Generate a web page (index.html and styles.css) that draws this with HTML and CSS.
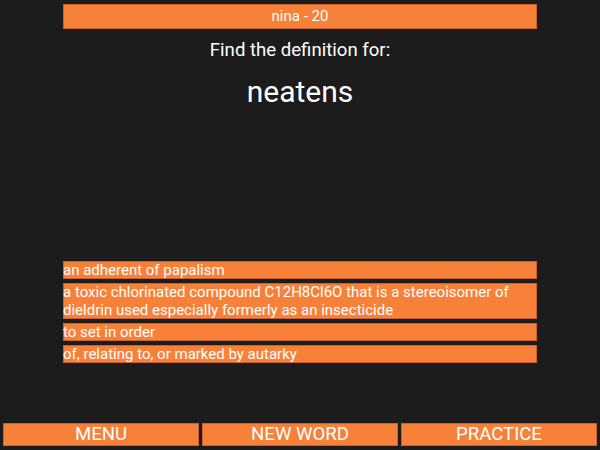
FILE: index.html
```html
<!DOCTYPE html>
<html>
<head>
<meta charset="utf-8">
<link rel="stylesheet" href="styles.css">
</head>
<body>
<div class="page">
  <div class="column">
    <div class="topbar">nina - 20</div>
    <div class="prompt">Find the definition for:</div>
    <div class="word">neatens</div>
  </div>
  <div class="column defs">
    <div class="def">an adherent of papalism</div>
    <div class="def">a toxic chlorinated compound C12H8Cl6O that is a stereoisomer of dieldrin used especially formerly as an insecticide</div>
    <div class="def">to set in order</div>
    <div class="def">of, relating to, or marked by autarky</div>
  </div>
  <div class="buttons">
    <div class="btn">MENU</div>
    <div class="btn">NEW WORD</div>
    <div class="btn">PRACTICE</div>
  </div>
</div>
</body>
</html>
```
FILE: styles.css
```css
html, body {
  margin: 0;
  padding: 0;
  background: #1c1c1c;
}
body {
  font-family: Roboto, "Liberation Sans", sans-serif;
  color: #ffffff;
}
.page {
  width: 600px;
  height: 450px;
  display: flex;
  flex-direction: column;
}
.column {
  width: 474px;
  margin: 0 auto;
  display: flex;
  flex-direction: column;
}
.topbar {
  margin-top: 4px;
  height: 25px;
  line-height: 25px;
  background: #f8813a;
  box-shadow: inset 0 0 0 1px #c9632a;
  text-align: center;
  font-size: 15px;
}
.prompt {
  margin-top: 11px;
  text-align: center;
  font-size: 18.6px;
  line-height: 21px;
}
.word {
  margin-top: 13px;
  text-align: center;
  font-size: 30px;
  line-height: 35px;
}
.defs {
  margin-top: 152px;
  gap: 4px;
}
.def {
  background: #f8813a;
  box-shadow: inset 0 0 0 1px #c9632a;
  font-size: 15px;
  line-height: 18px;
  padding: 0;
}
.buttons {
  margin-top: auto;
  margin-bottom: 4px;
  padding: 0 3px;
  display: flex;
  gap: 3px;
}
.btn {
  flex: 1;
  height: 23px;
  line-height: 23px;
  background: #f8813a;
  box-shadow: inset 0 0 0 1px #c9632a;
  text-align: center;
  font-size: 18.6px;
}
```
